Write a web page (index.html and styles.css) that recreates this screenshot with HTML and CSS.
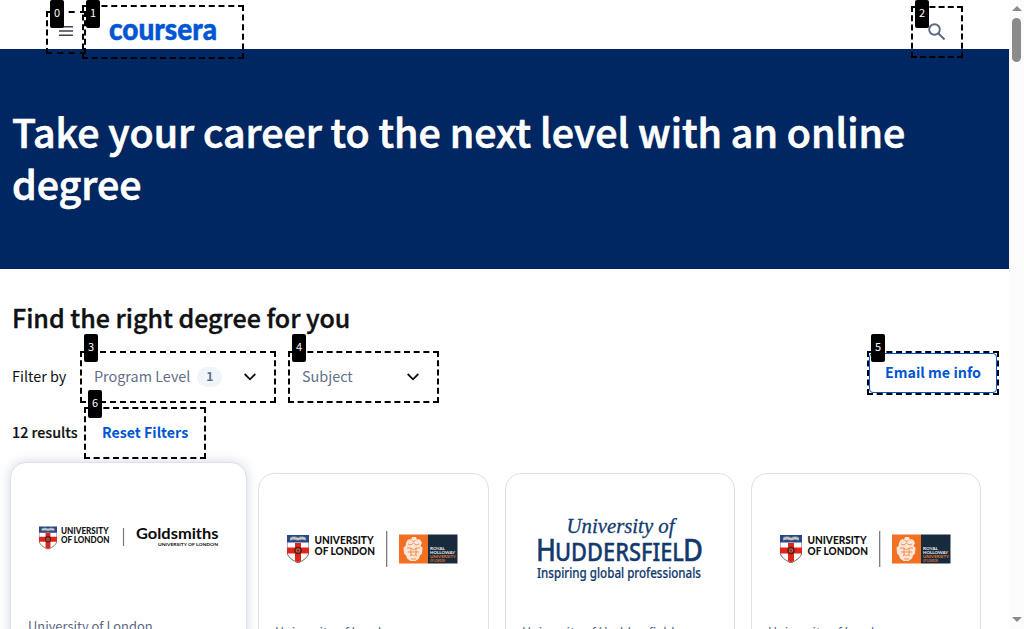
FILE: index.html
```html
<!DOCTYPE html>
<html lang="en">
<head>
<meta charset="utf-8">
<title>Online degrees | Coursera</title>
<link rel="stylesheet" href="styles.css">
</head>
<body>
<svg class="defs" width="0" height="0" aria-hidden="true">
  <symbol id="shield" viewBox="0 0 22 28">
    <path d="M0 0h22v16c0 6-5 9-11 12C5 25 0 22 0 16z" fill="#fff" stroke="#666" stroke-width="1"/>
    <path d="M0 0h22v7.500H0z" fill="#24468e"/>
    <path d="M3 2.500q4-2 8 0q4-2 8 0v3q-4-1.500-8 0q-4-1.500-8 0z" fill="#c5c9c9" stroke="#666" stroke-width=".6"/>
    <path d="M8 8h6v4.500h8v6h-8V26l-3 1.500L8 26v-7.500H0v-6h8z" fill="#e1251b"/>
    <circle cx="11" cy="15.500" r="3.800" fill="#4b251f"/><circle cx="11" cy="15.500" r="2.200" fill="#e5533b"/><circle cx="11" cy="15.500" r=".9" fill="#4b251f"/>
  </symbol>
  <symbol id="holloway" viewBox="0 0 172 38">
    <use href="#shield" x="0" y="5" width="22" height="28"/>
    <g class="uol"><text x="27.500" y="14.300" font-size="11" textLength="59" lengthAdjust="spacingAndGlyphs">UNIVERSITY</text><text x="27.500" y="25.300" font-size="11" textLength="60.500" lengthAdjust="spacingAndGlyphs">OF LONDON</text></g>
    <path d="M99.700 1v36" stroke="#707070" stroke-width="1.200"/>
    <path d="M112 4.500h29v29h-29z" fill="#f36f21"/><path d="M141 4.500h29.500v29H141z" fill="#182b3d"/>
    <path d="M119 13l1.500-3 2.500-1 1 1 1-3h4l1 3 1-1 2.500 1 1.500 3-1.500 3 2 1.500-.5 6-2 2-1 3-3.500 2.500h-5l-3.500-2.500-1-3-2-2-.5-6 2-1.500z" fill="#fbe5d6"/>
    <path d="M121 14l3 1 2.500-2 2.500 2 3-1M120 18h4l2.500 2 2.500-2h4M121 22h11M123 26l2-1.500 1.500 1.500 1.500-1.500 2 1.500M124.500 10l2 2 2-2M124 29h5M124 18v7M129 18v7" fill="none" stroke="#f36f21" stroke-width=".7"/>
    <g class="royal" font-size="4.500"><text x="143" y="19.500" textLength="15" lengthAdjust="spacingAndGlyphs">ROYAL</text><text x="143" y="23.500" textLength="25" lengthAdjust="spacingAndGlyphs">HOLLOWAY</text><text class="orange" x="143" y="28" textLength="26" lengthAdjust="spacingAndGlyphs">UNIVERSITY</text><text class="orange" x="143" y="31.500" font-size="3" textLength="15" lengthAdjust="spacingAndGlyphs">OF LONDON</text></g>
  </symbol>
</svg>
<div class="page">
  <header class="topbar">
    <svg class="menu" width="14" height="10" viewBox="0 0 14 10"><path d="M0 .8h14M0 5h14M0 9.200h14" stroke="#3d424b" stroke-width="1.500"/></svg>
    <svg class="brand" width="112" height="32" viewBox="0 0 112 32"><text x="0" y="23.900" font-size="29.500" textLength="108" lengthAdjust="spacingAndGlyphs">coursera</text></svg>
    <svg class="search" width="18" height="18" viewBox="0 0 18 18" fill="none" stroke="#5b6784" stroke-width="1.900"><circle cx="6.500" cy="6.500" r="5.300"/><path d="M10.500 10.500l6 6"/></svg>
  </header>
  <section class="hero"><h1>Take your career to the next level with an online<br>degree</h1></section>
  <main>
    <h2>Find the right degree for you</h2>
    <div class="filters">
      <span class="filter-label">Filter by</span>
      <div class="select level"><span class="name">Program Level</span><b class="count">1</b><svg class="chevron" width="12" height="8" viewBox="0 0 12 8"><path d="M.7 1L6 6.300 11.300 1"/></svg></div>
      <div class="select subject"><span class="name">Subject</span><svg class="chevron" width="12" height="8" viewBox="0 0 12 8"><path d="M.7 1L6 6.300 11.300 1"/></svg></div>
      <a class="email">Email me info</a>
    </div>
    <div class="results"><strong>12 results</strong><a class="reset">Reset Filters</a></div>
    <div class="cards">
      <article class="card raised">
        <svg class="logo" width="182" height="34" viewBox="0 0 182 34">
          <use href="#shield" x="0" y="6.500" width="18" height="23"/>
          <g class="uol"><text x="22" y="14" font-size="8.600" textLength="47.500" lengthAdjust="spacingAndGlyphs">UNIVERSITY</text><text x="22" y="23" font-size="8.600" textLength="48.500" lengthAdjust="spacingAndGlyphs">OF LONDON</text></g>
          <path d="M84.500 8v18" stroke="#777" stroke-width="1.200"/>
          <text class="gold" x="97" y="19" font-size="16" textLength="82.500" lengthAdjust="spacingAndGlyphs">Goldsmiths</text>
          <text class="gold" x="119" y="26" font-size="4.500" textLength="60" lengthAdjust="spacingAndGlyphs">UNIVERSITY OF LONDON</text>
        </svg>
        <p>University of London</p>
      </article>
      <article class="card"><svg class="logo" width="172" height="38"><use href="#holloway"/></svg><p>University of London</p></article>
      <article class="card">
        <svg class="logo tall" width="168" height="72" viewBox="0 0 168 72" fill="#123a6f">
          <text class="serif" x="29.500" y="20" font-size="21" textLength="108" lengthAdjust="spacingAndGlyphs">University of</text>
          <g class="hud"><text x="-1" y="47.500" font-size="31" textLength="20" lengthAdjust="spacingAndGlyphs">H</text><text x="18" y="47.500" font-size="25" textLength="129" lengthAdjust="spacingAndGlyphs">UDDERSFIEL</text><text x="146" y="47.500" font-size="31" textLength="20" lengthAdjust="spacingAndGlyphs">D</text>
          <text class="tag" x="0" y="64.500" font-size="13.500" textLength="164" lengthAdjust="spacingAndGlyphs">Inspiring global professionals</text></g>
        </svg><p>University of Huddersfield</p>
      </article>
      <article class="card"><svg class="logo" width="172" height="38"><use href="#holloway"/></svg><p>University of London</p></article>
    </div>
  </main>
</div>
<aside class="scrollbar"><i class="up"></i><i class="thumb"></i><i class="down"></i></aside>
<div class="mark m0"><b>0</b></div>
<div class="mark m1"><b>1</b></div>
<div class="mark m2"><b>2</b></div>
<div class="mark m3"><b>3</b></div>
<div class="mark m4"><b>4</b></div>
<div class="mark m5"><b>5</b></div>
<div class="mark m6"><b>6</b></div>
</body>
</html>
```
FILE: styles.css
```css
* { box-sizing: border-box; }
body { margin: 0; width: 1024px; height: 629px; overflow: hidden; position: relative; display: flex; background: #fff; color: #0f1114; font: 14.4px/24px "Noto Sans CJK SC", "Noto Sans", sans-serif; }
.defs { position: absolute; }
h1, h2, p { margin: 0; }
.page { width: 1009px; height: 629px; overflow: hidden; }
.topbar { height: 49px; display: flex; align-items: flex-start; padding-left: 59px; }
.menu { margin-top: 26px; }
.brand { margin: 16px 0 0 36px; fill: #0056d2; stroke: #0056d2; stroke-width: .5; font-family: Lato, sans-serif; font-weight: 900; }
.search { margin: 23px 0 0 707px; }
.hero { height: 220px; background: #002761; color: #fff; padding: 56px 12px 0; }
h1 { font-size: 39.35px; line-height: 52px; font-weight: 500; white-space: nowrap; -webkit-text-stroke: .7px #fff; }
main { padding: 30px 0 0 12px; }
h2 { font-size: 25px; line-height: 36px; font-weight: 500; white-space: nowrap; -webkit-text-stroke: .4px #0f1114; }
.filters { display: flex; margin-top: 15px; height: 52px; align-items: center; white-space: nowrap; }
.filter-label { width: 68px; }
.select { display: flex; align-items: center; height: 52px; padding: 0 20px 0 14px; color: #636f8a; }
.level { width: 196px; }
.subject { width: 151px; margin-left: 12px; }
.count { width: 25px; height: 20px; margin: 2px 0 0 7px; border-radius: 10px; background: #f0f4fb; color: #5b6784; font-size: 12.6px; line-height: 18px; text-align: center; font-weight: 500; -webkit-text-stroke: .2px #5b6784; }
.chevron { margin: 2px 0 0 auto; fill: none; stroke: #0f1114; stroke-width: 1.8; }
.email { width: 128px; height: 40px; margin: -6px 0 0 430px; border: 1px solid #0056d2; border-radius: 4px; color: #0056d2; text-align: center; line-height: 36px; font-size: 14.3px; font-weight: 700; }
.results { display: flex; height: 60px; line-height: 60px; white-space: nowrap; }
.results strong { width: 90px; font-size: 14.3px; font-weight: 500; -webkit-text-stroke: .2px #0f1114; }
.reset { color: #0056d2; font-size: 14.2px; font-weight: 700; }
.cards { display: flex; gap: 16px; margin-left: -2px; align-items: flex-start; }
.card { width: 230px; height: 300px; margin-top: 11px; border: 1px solid #dae1ed; border-radius: 16px; padding: 56px 0 0 16px; font-size: 12.6px; line-height: 18px; color: #5b6784; background: #fff; }
.card.raised { width: 237px; margin-top: 0; margin-right: -5px; box-shadow: 0 0 12px rgba(40, 60, 110, .2); padding: 57px 0 0 17px; font-size: 12.9px; }
.card:nth-child(2) { width: 231px; }
.logo { display: block; margin-left: 12px; }
.raised .logo { margin-left: 11px; }
.card p { margin-top: 55px; white-space: nowrap; }
.raised p { margin-top: 63px; }
.logo.tall { margin: -17px 0 0 15px; overflow: visible; }
.logo.tall + p { margin-top: 38px; }
.uol { font-family: Lato, sans-serif; font-weight: 900; fill: #111; }
.gold { font-family: Lato, sans-serif; font-weight: 700; fill: #0a0a0a; }
.royal { font-family: Lato, sans-serif; font-weight: 700; fill: #eef1f3; }
.orange { fill: #e87630; }
.serif { font-family: "Liberation Serif", serif; font-style: italic; stroke: #123a6f; stroke-width: .3; }
.hud { font-family: "Noto Sans", sans-serif; font-weight: 500; stroke: #123a6f; stroke-width: .4; }
.tag { stroke-width: .2; }
.scrollbar { width: 15px; height: 629px; background: #fcfcfc; display: flex; flex-direction: column; align-items: center; }
.up { margin-top: 6px; border: 5px solid transparent; border-top: 0; border-bottom-color: #8b8b8b; }
.thumb { margin-top: 7px; width: 9px; height: 44px; border-radius: 5px; background: #8b8b8b; }
.down { margin-top: 555px; border: 5px solid transparent; border-bottom: 0; border-top-color: #8b8b8b; }
.mark { position: absolute; border: 2px dashed #000; }
.mark b { position: absolute; left: 2px; top: -19px; width: 14px; height: 28px; border-radius: 2px; background: #000; color: #fff; font: 11px/24px "Noto Sans CJK SC", sans-serif; text-align: center; }
.m0 { left: 46px; top: 11px; width: 40px; height: 43px; }
.m0 b { top: -13px; }
.m1 { left: 82px; top: 5px; width: 162px; height: 54px; }
.m1 b { top: -7px; }
.m2 { left: 911px; top: 6px; width: 52px; height: 52px; }
.m2 b { top: -8px; }
.m3 { left: 80px; top: 351px; width: 196px; height: 52px; }
.m4 { left: 288px; top: 351px; width: 151px; height: 52px; }
.m5 { left: 867px; top: 351px; width: 132px; height: 44px; }
.m6 { left: 84px; top: 407px; width: 122px; height: 52px; }
```
